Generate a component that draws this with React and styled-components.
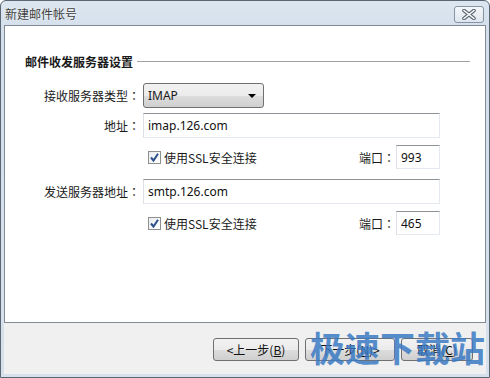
import React from "react";
import styled, { createGlobalStyle } from "styled-components";

const GlobalStyle = createGlobalStyle`
  html, body {
    margin: 0;
    padding: 0;
    background: #ffffff;
  }
  * {
    box-sizing: border-box;
  }
`;

const Window = styled.div`
  position: relative;
  width: 490px;
  height: 378px;
  display: flex;
  flex-direction: column;
  background: linear-gradient(#dce6f0, #d3dfeb 30px, #d6e1ec);
  border: 1px solid #5a6673;
  border-radius: 6px 6px 0 0;
  padding: 0 3px 3px 3px;
  font-family: "Noto Sans", "Noto Sans CJK SC", sans-serif;
  font-size: 12px;
  color: #1a1a1a;
`;

const TitleBar = styled.div`
  height: 24px;
  display: flex;
  align-items: center;
  justify-content: space-between;
  padding: 0 2px 0 1px;
`;

const Title = styled.span`
  font-family: "Noto Sans CJK SC", sans-serif;
  font-size: 12px;
  color: #3f3f3f;
  text-shadow: 0 0 3px #ffffff;
`;

const CloseButton = styled.div`
  width: 30px;
  height: 17px;
  margin-top: 3px;
  display: flex;
  align-items: center;
  justify-content: center;
  border: 1px solid #8593a3;
  border-radius: 3px;
  background: linear-gradient(#f4f7fa, #dfe6ee);
`;

const Panel = styled.div`
  height: 298px;
  background: #ffffff;
  border: 1px solid #838b94;
  padding: 27px 15px 0 20px;
`;

const SectionHead = styled.div`
  display: flex;
  align-items: center;
  gap: 4px;
  margin-bottom: 13px;
`;

const SectionTitle = styled.span`
  font-family: "Noto Sans CJK SC", sans-serif;
  font-weight: bold;
  font-size: 12px;
  color: #1a1a1a;
`;

const Rule = styled.div`
  flex: 1;
  height: 1px;
  background: #a0a0a0;
`;

const Form = styled.div`
  display: grid;
  grid-template-columns: 115px 1fr;
  column-gap: 3px;
  align-items: center;
`;

const Label = styled.span`
  justify-self: end;
  font-family: "Noto Sans CJK SC", sans-serif;
  font-size: 12px;
  line-height: 16px;
  color: #1a1a1a;
  margin-top: ${(p) => p.mt || 0}px;
`;

/* centred full-width colon, as the Windows UI font draws it */
const Colon = styled.span`
  font-family: "Noto Sans CJK TC", "Noto Sans CJK SC", sans-serif;
`;

const Field = styled.div`
  display: flex;
  align-items: center;
  height: ${(p) => p.h || 24}px;
  margin-top: ${(p) => p.mt || 0}px;
`;

const Select = styled.div`
  width: 121px;
  height: 25px;
  display: flex;
  align-items: center;
  justify-content: space-between;
  padding: 0 7px 0 4px;
  border: 1px solid #707070;
  border-radius: 3px;
  background: linear-gradient(#f2f2f2, #ebebeb 50%, #dddddd 51%, #cfcfcf);
  font-family: "Noto Sans", sans-serif;
  font-size: 12px;
`;

const Arrow = styled.span`
  width: 0;
  height: 0;
  border-left: 4px solid transparent;
  border-right: 4px solid transparent;
  border-top: 4px solid #000;
`;

const Input = styled.div`
  width: ${(p) => p.w}px;
  height: ${(p) => p.h || 25}px;
  display: flex;
  align-items: center;
  padding-left: 4px;
  border: 1px solid #abadb3;
  border-top-color: #8f9297;
  border-left-color: #dbdfe6;
  border-right-color: #e3e9ef;
  border-bottom-color: #e3e9ef;
  font-family: "Noto Sans", sans-serif;
  font-size: 12px;
  color: #111;
`;

const CheckRow = styled.div`
  display: flex;
  align-items: center;
  justify-content: space-between;
  width: 297px;
  height: 24px;
  padding-left: 5px;
`;

const Check = styled.label`
  display: flex;
  align-items: center;
  gap: 3px;
  font-family: "Noto Sans CJK SC", sans-serif;
  font-size: 12px;
  color: #1a1a1a;
`;

const Box = styled.span`
  width: 13px;
  height: 13px;
  display: flex;
  align-items: center;
  justify-content: center;
  border: 1px solid #8e8f8f;
  background: linear-gradient(135deg, #e9ecef, #ffffff);
`;

const Port = styled.div`
  display: flex;
  align-items: center;
  gap: 1px;
`;

const PortLabel = styled.span`
  font-family: "Noto Sans CJK SC", sans-serif;
  font-size: 12px;
`;

const Footer = styled.div`
  flex: 1;
  background: #f0f0f0;
  display: flex;
  justify-content: flex-end;
  align-items: flex-start;
  gap: 6px;
  padding: 15px 13px 0 0;
`;

const Button = styled.div`
  width: ${(p) => p.w}px;
  height: 23px;
  display: flex;
  align-items: center;
  justify-content: center;
  border: 1px solid #707070;
  border-radius: 3px;
  background: linear-gradient(#f2f2f2, #ebebeb 50%, #dddddd 51%, #cfcfcf);
  font-family: "Noto Sans CJK SC", sans-serif;
  font-size: 12px;
  color: #111;
  u {
    text-decoration: underline;
  }
`;

const Watermark = styled.div`
  position: absolute;
  left: 309px;
  top: 326px;
  font-family: "Noto Sans CJK SC", sans-serif;
  font-weight: bold;
  font-size: 35px;
  line-height: 40px;
  color: rgba(58, 122, 196, 0.85);
  white-space: nowrap;
  pointer-events: none;
`;

const CheckMark = () => (
  <svg width="11" height="11" viewBox="0 0 11 11">
    <path d="M2 5.5 L4.5 8.5 L9 1.8" fill="none" stroke="#2a4f8a" strokeWidth="2" />
  </svg>
);

const CloseIcon = () => (
  <svg width="16" height="11" viewBox="0 0 16 11">
    <path d="M3 1.5 L13 9.5 M13 1.5 L3 9.5" stroke="#5b6673" strokeWidth="3.6" strokeLinecap="round" />
    <path d="M3 1.5 L13 9.5 M13 1.5 L3 9.5" stroke="#ffffff" strokeWidth="1.6" strokeLinecap="round" />
  </svg>
);

const SslRow = ({ port }) => (
  <CheckRow>
    <Check>
      <Box>
        <CheckMark />
      </Box>
      使用SSL安全连接
    </Check>
    <Port>
      <PortLabel>
        端口<Colon>：</Colon>
      </PortLabel>
      <Input w={44} h={24}>{port}</Input>
    </Port>
  </CheckRow>
);

export default function App() {
  return (
    <>
      <GlobalStyle />
      <Window>
        <TitleBar>
          <Title>新建邮件帐号</Title>
          <CloseButton>
            <CloseIcon />
          </CloseButton>
        </TitleBar>
        <Panel>
          <SectionHead>
            <SectionTitle>邮件收发服务器设置</SectionTitle>
            <Rule />
          </SectionHead>
          <Form>
            <Label>
              接收服务器类型<Colon>：</Colon>
            </Label>
            <Field h={25}>
              <Select>
                IMAP
                <Arrow />
              </Select>
            </Field>

            <Label mt={5}>
              地址<Colon>：</Colon>
            </Label>
            <Field h={25} mt={5}>
              <Input w={297}>imap.126.com</Input>
            </Field>

            <span />
            <Field mt={7}>
              <SslRow port="993" />
            </Field>

            <Label mt={10}>
              发送服务器地址<Colon>：</Colon>
            </Label>
            <Field h={25} mt={10}>
              <Input w={297}>smtp.126.com</Input>
            </Field>

            <span />
            <Field mt={7}>
              <SslRow port="465" />
            </Field>
          </Form>
        </Panel>
        <Footer>
          <Button w={86}>
            &lt;上一步(<u>B</u>)
          </Button>
          <Button w={90}>
            下一步(<u>N</u>)&gt;
          </Button>
          <Button w={72}>
            取消(<u>C</u>)
          </Button>
        </Footer>
        <Watermark>极速下载站</Watermark>
      </Window>
    </>
  );
}
